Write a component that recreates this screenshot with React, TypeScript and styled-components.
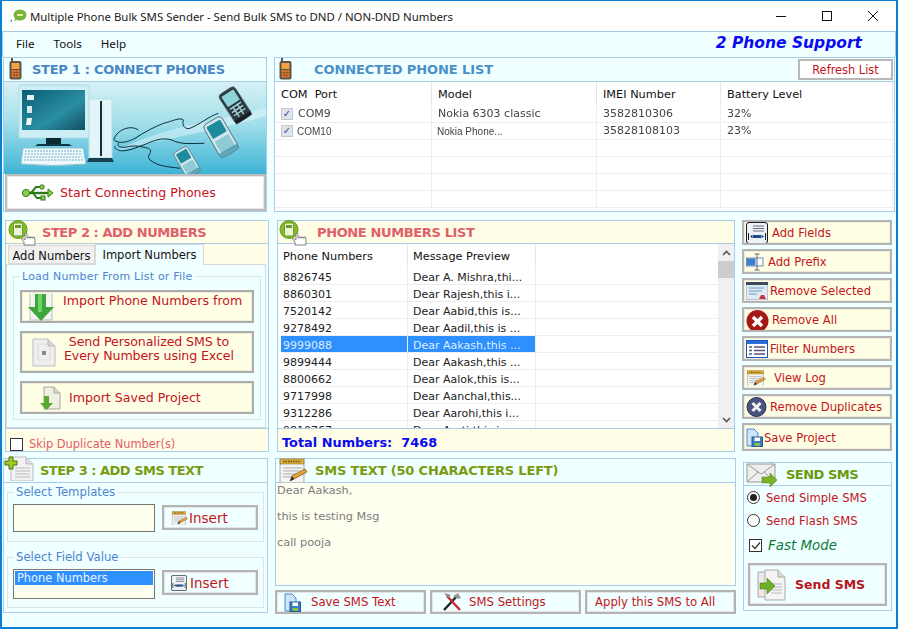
import React from "react";
import styled, { createGlobalStyle } from "styled-components";

const Global = createGlobalStyle`
  html, body { margin: 0; padding: 0; background: #f0ffff; }
  * { box-sizing: border-box; }
  body { font-family: "DejaVu Sans", Verdana, sans-serif; font-size: 12px; }
`;
const Win = styled.div`
  width: 898px; height: 629px; background: #f0ffff; border: 1px solid #0a7fd4; border-width: 1px 2px 2px 2px; overflow: hidden;
  display: flex; flex-direction: column;
`;
const TitleBar = styled.div`
  height: 31px; background: #fff; display: flex; align-items: center; padding-left: 8px; flex: none;
  border-bottom: 1px solid #a3c8e6;
`;
const TitleText = styled.span`
  font: 11.4px "Noto Sans", sans-serif; color: #1a1a1a; margin-left: 3px; flex: 1;
`;
const WinBtn = styled.div`
  width: 46px; height: 30px; display: flex; align-items: center; justify-content: center;
`;
const MenuBar = styled.div`
  height: 25px; display: flex; align-items: center; flex: none; padding: 0 0 3px 13px; border-left: 1px solid #a3c8e6; border-right: 1px solid #a3c8e6;
`;
const MenuItem = styled.span`
  font: 11.6px "Noto Sans", sans-serif; color: #111; margin-right: 19px;
`;
const Support = styled.span`
  margin-left: auto; margin-right: 33px; font: italic bold 15.5px "DejaVu Sans", sans-serif; color: #0a0af0;
`;
const Row = styled.div<{ $h: number; $pad: number; $gap: number; $mt?: number }>`
  display: flex; height: ${(p) => p.$h}px; padding-left: ${(p) => p.$pad}px; gap: ${(p) => p.$gap}px; margin-top: ${(p) => p.$mt || 0}px; flex: none;
`;
const Panel = styled.div<{ $w: number; $h?: number }>`
  width: ${(p) => p.$w}px; ${(p) => (p.$h ? `height: ${p.$h}px;` : "")} border: 1px solid #a9cde8; display: flex; flex-direction: column; flex: none;
`;
const Header = styled.div<{ $bg: string; $color: string; $left: number; $h?: number; $ls: number }>`
  height: ${(p) => p.$h || 24}px; flex: none; background: ${(p) => p.$bg}; border-bottom: 1px solid #a9cde8; color: ${(p) => p.$color};
  font: bold 13px "DejaVu Sans", sans-serif; display: flex; align-items: center; position: relative; padding-left: ${(p) => p.$left}px; letter-spacing: ${(p) => p.$ls}px; white-space: nowrap;
`;
const HeadIcon = styled.span<{ $x: number; $y: number }>`
  position: absolute; left: ${(p) => p.$x}px; top: ${(p) => p.$y}px; line-height: 0; z-index: 2;
`;
const Illustration = styled.div`
  height: 92px; flex: none; line-height: 0;
`;
const WideBtn = styled.div`
  flex: 1; background: #fff; border: 2px solid #bdbdbd; display: flex; align-items: center; padding-left: 14px; margin-left: 1px;
  color: #c4141c; font-size: 12.6px; gap: 6px; box-shadow: inset 0 0 0 1px #e8e8e8;
`;
const RefreshBtn = styled.div`
  margin-left: auto; width: 95px; height: 21px; margin-right: 1px; border: 2px solid #b8b8b8; background: #fff; color: #c4141c; font-size: 11.4px;
  font-weight: normal; display: flex; align-items: center; justify-content: center; letter-spacing: 0;
`;
const Table = styled.div`
  flex: 1; background: #fff; overflow: hidden;
`;
const THead = styled.div`
  height: 24px; display: flex; background: #fff;
`;
const TH = styled.div<{ $w: number; $pad?: number }>`
  width: ${(p) => p.$w}px; flex: none; font-size: 11.3px; color: #111; padding: 0 0 0 ${(p) => p.$pad ?? 6}px; display: flex; align-items: center; border-right: 1px solid #e6e6e6; white-space: pre;
`;
const TR = styled.div`
  height: 17px; display: flex; border-bottom: 1px solid #eeeeee; flex: none;
`;
const TD = styled.div<{ $w: number; $sel?: boolean; $pad?: number; $top?: number }>`
  width: ${(p) => p.$w}px; flex: none; font-size: 11px; padding: ${(p) => p.$top || 0}px 0 0 ${(p) => p.$pad ?? 6}px; display: flex; align-items: center; gap: 5px; border-right: 1px solid #eeeeee; white-space: nowrap; overflow: hidden;
  color: ${(p) => (p.$sel ? "#dfeeff" : "#222")}; background: ${(p) => (p.$sel ? "#2e8fff" : "transparent")};
`;
const Fuzzy = styled.span<{ $narrow?: boolean }>`
  filter: blur(0.45px); color: #444; margin-top: ${(p) => (p.$narrow ? 1 : -2)}px;
  font: ${(p) => (p.$narrow ? '10px "Liberation Sans"' : '11px "DejaVu Sans"')}, sans-serif;
  margin-left: ${(p) => (p.$narrow ? -1 : 0)}px;
`;
const GridCheck = styled.span`
  width: 12px; height: 12px; background: #dfe3ea; border: 1px solid #c3c7cf; display: inline-flex; align-items: center; justify-content: center; color: #3a48a8; font-size: 10px; line-height: 1; flex: none;
`;
const Tabs = styled.div`
  display: flex; height: 20px; align-items: flex-end; padding-left: 2px; flex: none; position: relative; z-index: 1; background: #fffde6;
`;
const Tab = styled.div<{ $on?: boolean }>`
  font-size: 11.5px; color: #111; height: ${(p) => (p.$on ? 21 : 19)}px; padding: ${(p) => (p.$on ? "0 0 1px" : "3px 0 0")}; display: flex; align-items: center; width: ${(p) => (p.$on ? 109 : 87)}px; justify-content: center;
  background: ${(p) => (p.$on ? "#f0ffff" : "#f0f0f0")}; border: 1px solid #d9d9d9; border-bottom: ${(p) => (p.$on ? "none" : "1px solid #d9d9d9")}; margin-bottom: ${(p) => (p.$on ? -1 : 0)}px; position: relative; z-index: ${(p) => (p.$on ? 2 : 1)};
`;
const TabBody = styled.div`
  height: 164px; margin-right: 2px; background: #f0ffff; border: 1px solid #d9d9d9; padding: 6px 4px 0 6px; flex: none;
`;
const Field = styled.fieldset<{ $h: number }>`
  margin: 0; padding: 0; height: ${(p) => p.$h}px; border: 1px solid #dfe5e5; min-width: 0;
`;
const Legend = styled.legend<{ $size?: number }>`
  font-size: ${(p) => p.$size || 11}px; color: #4e85cf; padding: 0 2px; margin-left: 6px; line-height: 11px; letter-spacing: ${(p) => (p.$size ? 0 : 0.22)}px;
`;
const FieldCol = styled.div`
  display: flex; flex-direction: column; padding: 8px 6px 0 6px; gap: 8px;
`;
const ImportBtn = styled.div<{ $h: number; $left: number; $top?: boolean }>`
  height: ${(p) => p.$h}px; background: #ffffe6; border: 2px solid #acacac; display: flex; color: #c4141c; font-size: 12.6px; line-height: 14px; text-align: center; padding-left: ${(p) => p.$left}px;
  align-items: ${(p) => (p.$top ? "flex-start" : "center")}; padding-top: ${(p) => (p.$top ? 2 : 0)}px; box-shadow: inset 0 0 0 1px #ececd8; gap: 8px; white-space: nowrap;
`;
const ShiftUp = styled.span`
  margin-top: -6px; letter-spacing: -0.1px;
`;
const Skip = styled.div`
  flex: 1; background: #fffde6; display: flex; align-items: center; padding: 8px 0 0 4px; font-size: 11.4px; color: #e0606a; gap: 6px; border-top: 1px solid #a9cde8;
`;
const Box = styled.span`
  width: 13px; height: 13px; background: #fff; border: 1px solid #333; display: inline-flex; align-items: center; justify-content: center; flex: none;
`;
const ListWrap = styled.div`
  flex: 1; display: flex; overflow: hidden; background: #fff;
`;
const ListBody = styled.div`
  flex: 1; padding-left: 3px; overflow: hidden;
`;
const Scroll = styled.div`
  width: 16px; flex: none; background: #f0f0f0; display: flex; flex-direction: column; align-items: center;
`;
const ScrollBtn = styled.div`
  height: 17px; display: flex; align-items: center; justify-content: center; flex: none;
`;
const Thumb = styled.div`
  width: 16px; height: 17px; background: #cdcdcd; flex: none;
`;
const ScrollSpace = styled.div`
  flex: 1;
`;
const Total = styled.div`
  height: 23px; flex: none; border-top: 1px solid #a9cde8; background: #fffde6; color: #0a0af0; font: bold 12.9px "DejaVu Sans", sans-serif; display: flex; align-items: center; padding: 4px 0 0 4px; white-space: pre;
`;
const SideCol = styled.div`
  display: flex; flex-direction: column; gap: 4px; width: 150px; flex: none; margin-left: -1px;
`;
const SideBtn = styled.div<{ $h?: number; $gap: number }>`
  height: ${(p) => p.$h || 25}px; background: #ffffe6; border: 2px solid #b4b4b4; box-shadow: inset 0 0 0 1px #ececd8; display: flex; align-items: center; padding: 1px 0 0 2px; gap: ${(p) => p.$gap}px; font-size: 11.6px; color: #c4141c; white-space: nowrap; flex: none; overflow: hidden;
`;
const Col = styled.div`
  flex: 1; display: flex; flex-direction: column; padding: 4px 3px 0 3px;
`;
const FieldGap = styled.div`
  height: 10px; flex: none;
`;
const FieldRow = styled.div`
  display: flex; padding: 6px 0 0 5px; gap: 7px; align-items: flex-start;
`;
const InputBox = styled.div<{ $h: number }>`
  width: 142px; height: ${(p) => p.$h}px; background: #fffff0; border: 1px solid #777; padding: 1px; flex: none; font-size: 11.4px; color: #fff;
`;
const ListSel = styled.div`
  background: #2e8fff; height: 14px; line-height: 14px; padding-left: 2px; color: #e8f4ff;
`;
const InsertBtn = styled.div<{ $gap: number }>`
  width: 96px; height: 25px; background: #f0ffff; margin-top: 1px; border: 2px solid #b4b4b4; box-shadow: inset 0 0 0 1px #e2e6e6; display: flex; align-items: center; padding: 1px 0 0 7px; gap: ${(p) => p.$gap}px; color: #c4141c; font-size: 13.5px;
`;
const Message = styled.div`
  flex: 1; background: #fffff0; padding: 1px 1px 0; font-size: 11.3px; color: #7c7c7c; line-height: 13px; white-space: pre-line;
`;
const BottomBtns = styled.div`
  display: flex; gap: 4px; height: 24px; margin-top: 4px; flex: none;
`;
const BottomBtn = styled.div<{ $pad: number; $gap: number }>`
  width: 151px; background: #f0ffff; border: 2px solid #b4b4b4; box-shadow: inset 0 0 0 1px #e2e6e6; display: flex; align-items: center; padding-left: ${(p) => p.$pad}px; gap: ${(p) => p.$gap}px; color: #c4141c; font-size: 11.7px; white-space: nowrap; flex: none;
`;
const SmsCol = styled.div`
  width: 461px; flex: none; display: flex; flex-direction: column;
`;
const SendCol = styled.div`
  margin-top: 4px; width: 149px; height: 149px; border: 1px solid #a9cde8; display: flex; flex-direction: column; flex: none;
`;
const Radio = styled.div`
  display: flex; align-items: center; gap: 6px; font-size: 11.6px; color: #c4141c; height: 23px; padding-left: 3px; flex: none;
`;
const RadioDot = styled.span<{ $on?: boolean }>`
  width: 13px; height: 13px; border-radius: 50%; border: 1px solid #333; background: #fff; flex: none;
  display: inline-flex; align-items: center; justify-content: center;
  &::after { content: ""; width: 7px; height: 7px; border-radius: 50%; background: ${(p) => (p.$on ? "#222" : "transparent")}; }
`;
const Fast = styled.div`
  display: flex; align-items: center; gap: 6px; padding-left: 5px; margin-top: 1px; font: italic 13.4px "DejaVu Sans", sans-serif; color: #0b7a3c; height: 25px; flex: none;
`;
const SendBtn = styled.div`
  margin: 5px 4px 0 4px; height: 43px; background: #f0ffff; border: 2px solid #b4b4b4; box-shadow: inset 0 0 0 1px #e2e6e6; display: flex; align-items: center; padding-left: 7px; gap: 8px; color: #b8141c; font: bold 12.5px "DejaVu Sans", sans-serif; flex: none;
`;

const PhoneIcon = () => (
  <svg width="13" height="22" viewBox="0 0 13 22">
    <rect x="2" y="0" width="2" height="4" fill="#555" />
    <rect x="0.500" y="3" width="12" height="18.500" rx="2" fill="#55554e" />
    <rect x="2.500" y="5" width="8" height="6" fill="#f6a040" />
    <rect x="2.500" y="12" width="8" height="7.500" fill="#ee7a2c" />
    <path d="M2.500 14.500h8M2.500 17h8M5.200 12v7.500M7.800 12v7.500" stroke="#7a4a24" strokeWidth=".7" />
  </svg>
);
const TouchIcon = () => (
  <svg width="30" height="26" viewBox="0 0 30 26">
    <circle cx="10" cy="9.500" r="9" fill="#84ba2c" stroke="#5f9a1a" />
    <rect x="5.500" y="3" width="9" height="13" rx="1.500" fill="#eef3d6" stroke="#6a9a2a" />
    <rect x="7" y="5" width="6" height="3" fill="#6a9a2a" />
    <path d="M16 25v-3l-2.500-3 1-1 2.500 2v-6a1 1 0 012 0v4h1v-1h1.500v1h1v-1h1.500v1h1v-1h1.500l.5 3v5z" fill="#fff" stroke="#666" strokeWidth=".8" />
  </svg>
);
const PlusDocIcon = () => (
  <svg width="30" height="25" viewBox="0 0 30 25">
    <path d="M7 1h15l7 7v17H7z" fill="#f2f2f2" stroke="#bbb" />
    <path d="M22 1v7h7" fill="#ddd" stroke="#bbb" />
    <path d="M11 12h15M11 15h15M11 18h15M11 21h15" stroke="#bbb" />
    <path d="M5 1h4v4h4v4H9v4H5V9H1V5h4z" fill="#9ccc20" stroke="#4d6e10" />
  </svg>
);
const NotepadIcon = ({ s = 30 }: { s?: number }) => (
  <svg width={s} height={s * 0.83} viewBox="0 0 30 25">
    <rect x="2" y="2" width="24" height="23" fill="#f4f4f4" stroke="#aaa" />
    <rect x="2" y="1" width="24" height="5" fill="#e0b33c" stroke="#8a6a1c" strokeWidth=".6" />
    <path d="M5 3.500h18" stroke="#5a4410" strokeDasharray="1.500 1" strokeWidth="1.600" />
    <path d="M5 10h19M5 13h17M5 16h13M5 19h10" stroke="#aaa" />
    <path d="M12 23l2-5 13-7 2 3-13 7z" fill="#e8a23c" stroke="#6a4a1a" strokeWidth=".7" />
    <path d="M12 23l2-5 2.400 3.400z" fill="#333" />
  </svg>
);
const EnvelopeIcon = () => (
  <svg width="32" height="24" viewBox="0 0 32 24">
    <path d="M1 1h28v18H1z" fill="#eee" stroke="#999" />
    <path d="M1 1l14 10L29 1M1 19l11-10M29 19L18 9" fill="none" stroke="#999" />
    <path d="M16 14h8v-4l7 7-7 7v-4h-8z" fill="#78b428" stroke="#5a8a1c" strokeWidth=".6" />
  </svg>
);
const UsbIcon = () => (
  <svg width="33" height="20" viewBox="0 0 33 20">
    <g fill="none" stroke="#2d7a16">
      <path d="M6 10h24" strokeWidth="2.400" />
      <path d="M10 10l5-6h5M12 10l4 5h5" strokeWidth="2" />
    </g>
    <circle cx="5" cy="10" r="3.600" fill="#8bd04a" stroke="#2d7a16" />
    <circle cx="21" cy="4" r="2.200" fill="#8bd04a" stroke="#2d7a16" />
    <rect x="20" y="13" width="4" height="4" fill="#8bd04a" stroke="#2d7a16" />
    <path d="M27 6l5 4-5 4z" fill="#8bd04a" stroke="#2d7a16" />
  </svg>
);
const ArrowDown = () => (
  <svg width="28" height="27" viewBox="0 0 28 27">
    <path d="M3 0v26h22V0" fill="#f5f5f5" stroke="#bbb" />
    <path d="M8 0h11v13h8L14 27 1 13h7z" fill="#3ca83c" />
    <path d="M11 0h4v18h-4z" fill="#6ed46a" />
  </svg>
);
const SheetIcon = () => (
  <svg width="24" height="29" viewBox="0 0 24 29">
    <path d="M1 1h15l7 7v20H1z" fill="#efefef" stroke="#bbb" />
    <path d="M16 1v7h7" fill="#d8d8d8" stroke="#bbb" />
    <rect x="6" y="6" width="12" height="16" fill="none" stroke="#ccc" strokeDasharray="1 1" />
    <rect x="10" y="13" width="4" height="4" fill="#888" />
  </svg>
);
const ImportDoc = () => (
  <svg width="21" height="24" viewBox="0 0 21 24">
    <path d="M4 1h10l6 6v16H4z" fill="#efefe4" stroke="#a8a89a" />
    <path d="M14 1v6h6" fill="#d8d8cc" stroke="#a8a89a" />
    <path d="M4 10h5v7h4l-6.500 7L0 17h4z" fill="#58a82c" />
  </svg>
);
const AddFieldsIcon = ({ s = 22 }: { s?: number }) => (
  <svg width={s} height={s} viewBox="0 0 22 22">
    <rect x="0.500" y="0.500" width="21" height="21" rx="2.500" fill="#eef2f6" stroke="#1a1a1a" />
    <path d="M7 4h11M7 6.500h11M7 9h11" stroke="#66707a" />
    <path d="M2.500 11v7M19.500 11v7" stroke="#123" />
    <path d="M4 14.500l2.500-2v4zM18 14.500l-2.500-2v4z" fill="#1d4f86" />
    <rect x="7" y="13" width="8" height="3" fill="#1d4f86" />
  </svg>
);
const PrefixIcon = () => (
  <svg width="18" height="18" viewBox="0 0 18 18">
    <rect x="0.500" y="5" width="16.500" height="8" fill="#fff" stroke="#6a8ab0" />
    <rect x="1" y="5.500" width="8.500" height="7" fill="#3b7fd0" />
    <path d="M11 1v16M8.500 1h5M8.500 17h5" stroke="#667" />
  </svg>
);
const RemoveSelIcon = () => (
  <svg width="22" height="18" viewBox="0 0 22 18">
    <rect x="0" y="0" width="22" height="18" fill="#dfe9f2" stroke="#778" strokeWidth=".6" />
    <rect x="0" y="0" width="22" height="3" fill="#3d4a5c" />
    <path d="M3 6h15M3 9h13M3 12h8" stroke="#6aa0d0" />
    <path d="M13 17l2-4h3l2 4z" fill="#d03040" />
  </svg>
);
const RemoveAllIcon = () => (
  <svg width="23" height="21" viewBox="0 0 23 21">
    <circle cx="11.500" cy="11" r="11" fill="#a51818" />
    <path d="M7 7l9 9M16 7l-9 9" stroke="#fff" strokeWidth="3.400" />
  </svg>
);
const FilterIcon = () => (
  <svg width="22" height="18" viewBox="0 0 22 18">
    <rect x="0.500" y="0.500" width="21" height="17" fill="#fff" stroke="#1556c0" />
    <rect x="1" y="1" width="20" height="3" fill="#2a70d8" />
    <path d="M3 7h3M8 7h11M3 10.500h3M8 10.500h11M3 14h3M8 14h11" stroke="#557" strokeWidth="1.400" />
  </svg>
);
const DupIcon = () => (
  <svg width="21" height="20" viewBox="0 0 21 20">
    <circle cx="10.500" cy="10" r="9.500" fill="#4a5480" stroke="#2a3050" />
    <path d="M6.500 6l8 8M14.500 6l-8 8" stroke="#f2f2f2" strokeWidth="3" />
  </svg>
);
const SaveIcon = () => (
  <svg width="17" height="19" viewBox="0 0 17 19">
    <path d="M1 1h7l4 4v13H1z" fill="#cfe4fa" stroke="#4a8ad0" />
    <rect x="6" y="9" width="10.500" height="9.500" fill="#3d7fc0" stroke="#245a90" />
    <rect x="8.500" y="9.500" width="5.500" height="3.500" fill="#fff" />
    <rect x="8.500" y="15" width="5.500" height="3" fill="#86c050" />
  </svg>
);
const ToolsIcon = () => (
  <svg width="20" height="20" viewBox="0 0 20 20">
    <path d="M2 18L15 4" stroke="#222" strokeWidth="2.400" />
    <path d="M18 18L5 4" stroke="#c82828" strokeWidth="2.400" />
    <path d="M2 1l7 2-3 3z" fill="#888" />
    <path d="M11 4l5-3 3 5-3 1z" fill="#999" />
  </svg>
);
const SendDocs = () => (
  <svg width="30" height="32" viewBox="0 0 30 32">
    <path d="M1 3h13l5 5v20H1z" fill="#f0e8e8" stroke="#aaa" />
    <path d="M8 1h13l7 7v23H8z" fill="#f4f4f4" stroke="#aaa" />
    <path d="M21 1v7h7" fill="#ddd" stroke="#aaa" />
    <path d="M14 15h11M14 18h11M14 21h11M14 24h11" stroke="#bbb" />
    <path d="M3 14h7v-5l8 8-8 8v-5H3z" fill="#70b028" stroke="#4a8018" strokeWidth=".6" />
  </svg>
);
const Bubble = () => (
  <svg width="17" height="14" viewBox="0 0 17 14">
    <ellipse cx="10" cy="6" rx="6.500" ry="5.500" fill="#79b53a" />
    <path d="M5.500 9l-1.500 3 4-1.500z" fill="#79b53a" />
    <rect x="7" y="5" width="6" height="2" fill="#e6f0a0" />
    <path d="M1.500 10.500v1.500l-1 1" stroke="#1a8ac0" fill="none" />
  </svg>
);
const PhoneArt = ({ x, y, r, s, dark }: { x: number; y: number; r: number; s: number; dark?: boolean }) => (
  <g transform={`translate(${x} ${y}) rotate(${r}) scale(${s})`}>
    <rect x="-10" y="-18" width="20" height="36" rx="4" fill={dark ? "#2c3a40" : "#cfe7ec"} stroke="#4c6a72" strokeWidth=".8" />
    <rect x="-7.500" y="-15" width="15" height="13" rx="1" fill={dark ? "#8ed2da" : "#1f8a9c"} />
    {dark ? (
      <path d="M-7 1h14M-7 5h14M-7 9h14M-3 0v13M2.500 0v13" stroke="#a8d8de" strokeWidth="1.400" />
    ) : (
      <rect x="-7.500" y="1" width="15" height="14" rx="1" fill="#8fcad6" />
    )}
    <path d={dark ? "M-10 14h20v4h-20z" : "M-10 13h20v5h-20z"} fill={dark ? "#141a1d" : "#4a98aa"} opacity=".8" />
  </g>
);
const Art = () => (
  <svg width="262" height="92" viewBox="0 0 262 92">
    <defs>
      <linearGradient id="sky" x1="0" y1="0" x2="0" y2="1">
        <stop offset="0" stopColor="#d6f1f5" />
        <stop offset="0.45" stopColor="#a2dfea" />
        <stop offset="1" stopColor="#3cb3d6" />
      </linearGradient>
      <linearGradient id="scr" x1="0" y1="0" x2="1" y2="1">
        <stop offset="0" stopColor="#0a5c72" />
        <stop offset="0.6" stopColor="#2a8ea4" />
        <stop offset="1" stopColor="#0f4d60" />
      </linearGradient>
    </defs>
    <rect width="262" height="92" fill="url(#sky)" />
    <path d="M110 70C160 44 210 40 262 26v8C210 50 160 56 110 70z" fill="#eafafc" opacity=".45" />
    <rect x="15" y="3" width="70" height="53" rx="1.500" fill="#cdeef4" stroke="#b2dde7" />
    <rect x="18" y="8" width="63" height="40" fill="url(#scr)" />
    <rect x="23" y="13" width="7" height="5" fill="#e4f0f2" />
    <rect x="23" y="24" width="5" height="7" fill="#d4e8ec" />
    <path d="M23 36h5l-1 7h-5z" fill="#f0f6f6" />
    <rect x="42" y="56" width="15" height="6" fill="#0c2a34" />
    <path d="M34 62h31l3 2H31z" fill="#0f3644" />
    <path d="M19 66h60l3 16q-32 3-65 0z" fill="#f0fafc" stroke="#8fc3d2" />
    <path d="M21 69h56M21 72h57M20 75h58M20 78h59" stroke="#98c8d8" strokeWidth="1.500" strokeDasharray="2 1" />
    <rect x="85" y="17" width="23" height="59" fill="#e3f5f8" stroke="#b8e0e8" />
    <rect x="96" y="19" width="2" height="55" fill="#12323f" />
    <path d="M85 76l-2 4h27l-2-4z" fill="#16404e" />
    <g transform="translate(131 -2) scale(.3333)" fill="none" stroke="#0d2b36" strokeWidth="3">
      <path d="M250 100C220 110 200 130 165 145C150 150 140 135 145 120C135 110 110 125 85 130C60 140 30 155 0 175C-20 185-50 195-64 178C-50 145-10 135 10 150" />
      <path d="M208 190C170 190 140 195 110 180C80 170 50 185 25 195C10 200-10 210-30 212C-50 215-64 205-60 198" />
      <path d="M135 265C100 260 70 260 45 240C30 225 60 215 40 205C20 200 0 195-20 200C-40 205-55 200-50 190" />
    </g>
    <PhoneArt x={231} y={23} r={-33} s={0.95} dark />
    <PhoneArt x={217} y={55} r={-30} s={1.05} />
    <PhoneArt x={183} y={80} r={-30} s={0.8} />
  </svg>
);

const phoneRows: [string, string, boolean?][] = [
  ["8826745", "Dear A. Mishra,thi..."],
  ["8860301", "Dear Rajesh,this i..."],
  ["7520142", "Dear Aabid,this is..."],
  ["9278492", "Dear Aadil,this is ..."],
  ["9999088", "Dear Aakash,this ...", true],
  ["9899444", "Dear Aakash,this ..."],
  ["8800662", "Dear Aalok,this is..."],
  ["9717998", "Dear Aanchal,this..."],
  ["9312286", "Dear Aarohi,this i..."],
  ["9810767", "Dear Aarti,this is ..."],
];

const Chev = ({ up }: { up?: boolean }) => (
  <svg width="9" height="6" viewBox="0 0 9 6">
    <path d={up ? "M1 5l3.500-3.500L8 5" : "M1 1l3.500 3.500L8 1"} fill="none" stroke="#555" strokeWidth="1.600" />
  </svg>
);

const EmptyRow = ({ cw }: { cw: number[] }) => (
  <TR>{cw.map((w, i) => <TD key={i} $w={w} />)}</TR>
);

export default function App() {
  const cw = [157, 165, 124, 172];
  return (
    <Win>
      <Global />
      <TitleBar>
        <Bubble />
        <TitleText>Multiple Phone Bulk SMS Sender - Send Bulk SMS to DND / NON-DND Numbers</TitleText>
        <WinBtn>
          <svg width="10" height="10" viewBox="0 0 10 10"><path d="M0 5.500h10" stroke="#111" /></svg>
        </WinBtn>
        <WinBtn>
          <svg width="10" height="10" viewBox="0 0 10 10"><rect x=".5" y=".5" width="9" height="9" fill="none" stroke="#111" /></svg>
        </WinBtn>
        <WinBtn>
          <svg width="10" height="10" viewBox="0 0 10 10"><path d="M0 0l10 10M10 0L0 10" stroke="#111" /></svg>
        </WinBtn>
      </TitleBar>
      <MenuBar>
        <MenuItem>File</MenuItem>
        <MenuItem>Tools</MenuItem>
        <MenuItem>Help</MenuItem>
        <Support>2 Phone Support</Support>
      </MenuBar>

      <Row $h={155} $pad={1} $gap={7}>
        <Panel $w={264}>
          <Header $bg="#f0ffff" $color="#4a86c5" $left={28} $ls={-0.28}>
            <HeadIcon $x={5} $y={0}><PhoneIcon /></HeadIcon>
            STEP 1 : CONNECT PHONES
          </Header>
          <Illustration><Art /></Illustration>
          <WideBtn>
            <UsbIcon />
            <span>Start Connecting Phones</span>
          </WideBtn>
        </Panel>
        <Panel $w={621}>
          <Header $bg="#f0ffff" $color="#4a90c8" $left={39} $ls={-0.1}>
            <HeadIcon $x={4} $y={0}><PhoneIcon /></HeadIcon>
            CONNECTED PHONE LIST
            <RefreshBtn>Refresh List</RefreshBtn>
          </Header>
          <Table>
            <THead>
              <TH $w={cw[0]}>COM  Port</TH>
              <TH $w={cw[1]}>Model</TH>
              <TH $w={cw[2]}>IMEI Number</TH>
              <TH $w={cw[3]}>Battery Level</TH>
            </THead>
            <TR>
              <TD $w={cw[0]}><GridCheck>✓</GridCheck><Fuzzy>COM9</Fuzzy></TD>
              <TD $w={cw[1]}><Fuzzy>Nokia 6303 classic</Fuzzy></TD>
              <TD $w={cw[2]}><Fuzzy>3582810306</Fuzzy></TD>
              <TD $w={cw[3]}><Fuzzy>32%</Fuzzy></TD>
            </TR>
            <TR>
              <TD $w={cw[0]}><GridCheck>✓</GridCheck><Fuzzy $narrow>COM10</Fuzzy></TD>
              <TD $w={cw[1]}><Fuzzy $narrow>Nokia Phone...</Fuzzy></TD>
              <TD $w={cw[2]}><Fuzzy>35828108103</Fuzzy></TD>
              <TD $w={cw[3]}><Fuzzy>23%</Fuzzy></TD>
            </TR>
            <EmptyRow cw={cw} />
            <EmptyRow cw={cw} />
            <EmptyRow cw={cw} />
            <EmptyRow cw={cw} />
          </Table>
        </Panel>
      </Row>

      <Row $h={232} $pad={3} $gap={8} $mt={8}>
        <Panel $w={264}>
          <Header $bg="#fffde6" $color="#e0606a" $left={36} $h={23} $ls={-0.45}>
            <HeadIcon $x={2} $y={-1}><TouchIcon /></HeadIcon>
            STEP 2 : ADD NUMBERS
          </Header>
          <Tabs>
            <Tab>Add Numbers</Tab>
            <Tab $on>Import Numbers</Tab>
          </Tabs>
          <TabBody>
            <Field $h={149}>
              <Legend>Load Number From List or File</Legend>
              <FieldCol>
                <ImportBtn $h={33} $left={5} $top>
                  <ArrowDown />
                  <span>Import Phone Numbers from</span>
                </ImportBtn>
                <ImportBtn $h={42} $left={10}>
                  <SheetIcon />
                  <ShiftUp>Send Personalized SMS to<br />Every Numbers using Excel</ShiftUp>
                </ImportBtn>
                <ImportBtn $h={33} $left={18}>
                  <ImportDoc />
                  <span>Import Saved Project</span>
                </ImportBtn>
              </FieldCol>
            </Field>
          </TabBody>
          <Skip>
            <Box />
            Skip Duplicate Number(s)
          </Skip>
        </Panel>
        <Panel $w={458}>
          <Header $bg="#fffde6" $color="#e0606a" $left={39} $h={23} $ls={-0.37}>
            <HeadIcon $x={1} $y={-1}><TouchIcon /></HeadIcon>
            PHONE NUMBERS LIST
          </Header>
          <ListWrap>
            <ListBody>
              <THead>
                <TH $w={127} $pad={2}>Phone Numbers</TH>
                <TH $w={128} $pad={5}>Message Preview</TH>
              </THead>
              {phoneRows.map(([n, m, sel]) => (
                <TR key={n}>
                  <TD $w={127} $sel={sel} $pad={2} $top={2}>{n}</TD>
                  <TD $w={128} $sel={sel} $pad={5} $top={2}>{m}</TD>
                </TR>
              ))}
            </ListBody>
            <Scroll>
              <ScrollBtn><Chev up /></ScrollBtn>
              <Thumb />
              <ScrollSpace />
              <ScrollBtn><Chev /></ScrollBtn>
            </Scroll>
          </ListWrap>
          <Total>{"Total Numbers:  7468"}</Total>
        </Panel>
        <SideCol>
          <SideBtn $gap={4}><AddFieldsIcon />Add Fields</SideBtn>
          <SideBtn $gap={4}><PrefixIcon />Add Prefix</SideBtn>
          <SideBtn $gap={2}><RemoveSelIcon />Remove Selected</SideBtn>
          <SideBtn $gap={3}><RemoveAllIcon />Remove All</SideBtn>
          <SideBtn $gap={2}><FilterIcon />Filter Numbers</SideBtn>
          <SideBtn $gap={8}><NotepadIcon s={20} />View Log</SideBtn>
          <SideBtn $gap={3}><DupIcon />Remove Duplicates</SideBtn>
          <SideBtn $h={28} $gap={1}><SaveIcon />Save Project</SideBtn>
        </SideCol>
      </Row>

      <Row $h={155} $pad={1} $gap={7} $mt={6}>
        <Panel $w={265}>
          <Header $bg="#f0ffff" $color="#7a9a10" $left={36} $ls={-0.5}>
            <HeadIcon $x={0} $y={-3}><PlusDocIcon /></HeadIcon>
            STEP 3 : ADD SMS TEXT
          </Header>
          <Col>
            <Field $h={55}>
              <Legend $size={11.7}>Select Templates</Legend>
              <FieldRow>
                <InputBox $h={28} />
                <InsertBtn $gap={1}><NotepadIcon s={17} />Insert</InsertBtn>
              </FieldRow>
            </Field>
            <FieldGap />
            <Field $h={56}>
              <Legend $size={11.7}>Select Field Value</Legend>
              <FieldRow>
                <InputBox $h={30}><ListSel>Phone Numbers</ListSel></InputBox>
                <InsertBtn $gap={3}><AddFieldsIcon s={16} />Insert</InsertBtn>
              </FieldRow>
            </Field>
          </Col>
        </Panel>
        <SmsCol>
          <Panel $w={461} $h={128}>
            <Header $bg="#f0ffff" $color="#7a9a10" $left={39} $ls={-0.18}>
              <HeadIcon $x={2} $y={-1}><NotepadIcon s={30} /></HeadIcon>
              SMS TEXT (50 CHARACTERS LEFT)
            </Header>
            <Message>{"Dear Aakash,\n\nthis is testing Msg\n\ncall pooja"}</Message>
          </Panel>
          <BottomBtns>
            <BottomBtn $pad={7} $gap={10}><SaveIcon />Save SMS Text</BottomBtn>
            <BottomBtn $pad={10} $gap={7}><ToolsIcon />SMS Settings</BottomBtn>
            <BottomBtn $pad={8} $gap={0}>Apply this SMS to All</BottomBtn>
          </BottomBtns>
        </SmsCol>
        <SendCol>
          <Header $bg="#f0ffff" $color="#6a9a10" $left={42} $h={23} $ls={-0.5}>
            <HeadIcon $x={2} $y={0}><EnvelopeIcon /></HeadIcon>
            SEND SMS
          </Header>
          <Radio><RadioDot $on />Send Simple SMS</Radio>
          <Radio><RadioDot />Send Flash SMS</Radio>
          <Fast>
            <Box>
              <svg width="10" height="9" viewBox="0 0 10 9"><path d="M1 4.500l3 3 5-6" fill="none" stroke="#333" strokeWidth="1.200" /></svg>
            </Box>
            Fast Mode
          </Fast>
          <SendBtn><SendDocs />Send SMS</SendBtn>
        </SendCol>
      </Row>
    </Win>
  );
}
